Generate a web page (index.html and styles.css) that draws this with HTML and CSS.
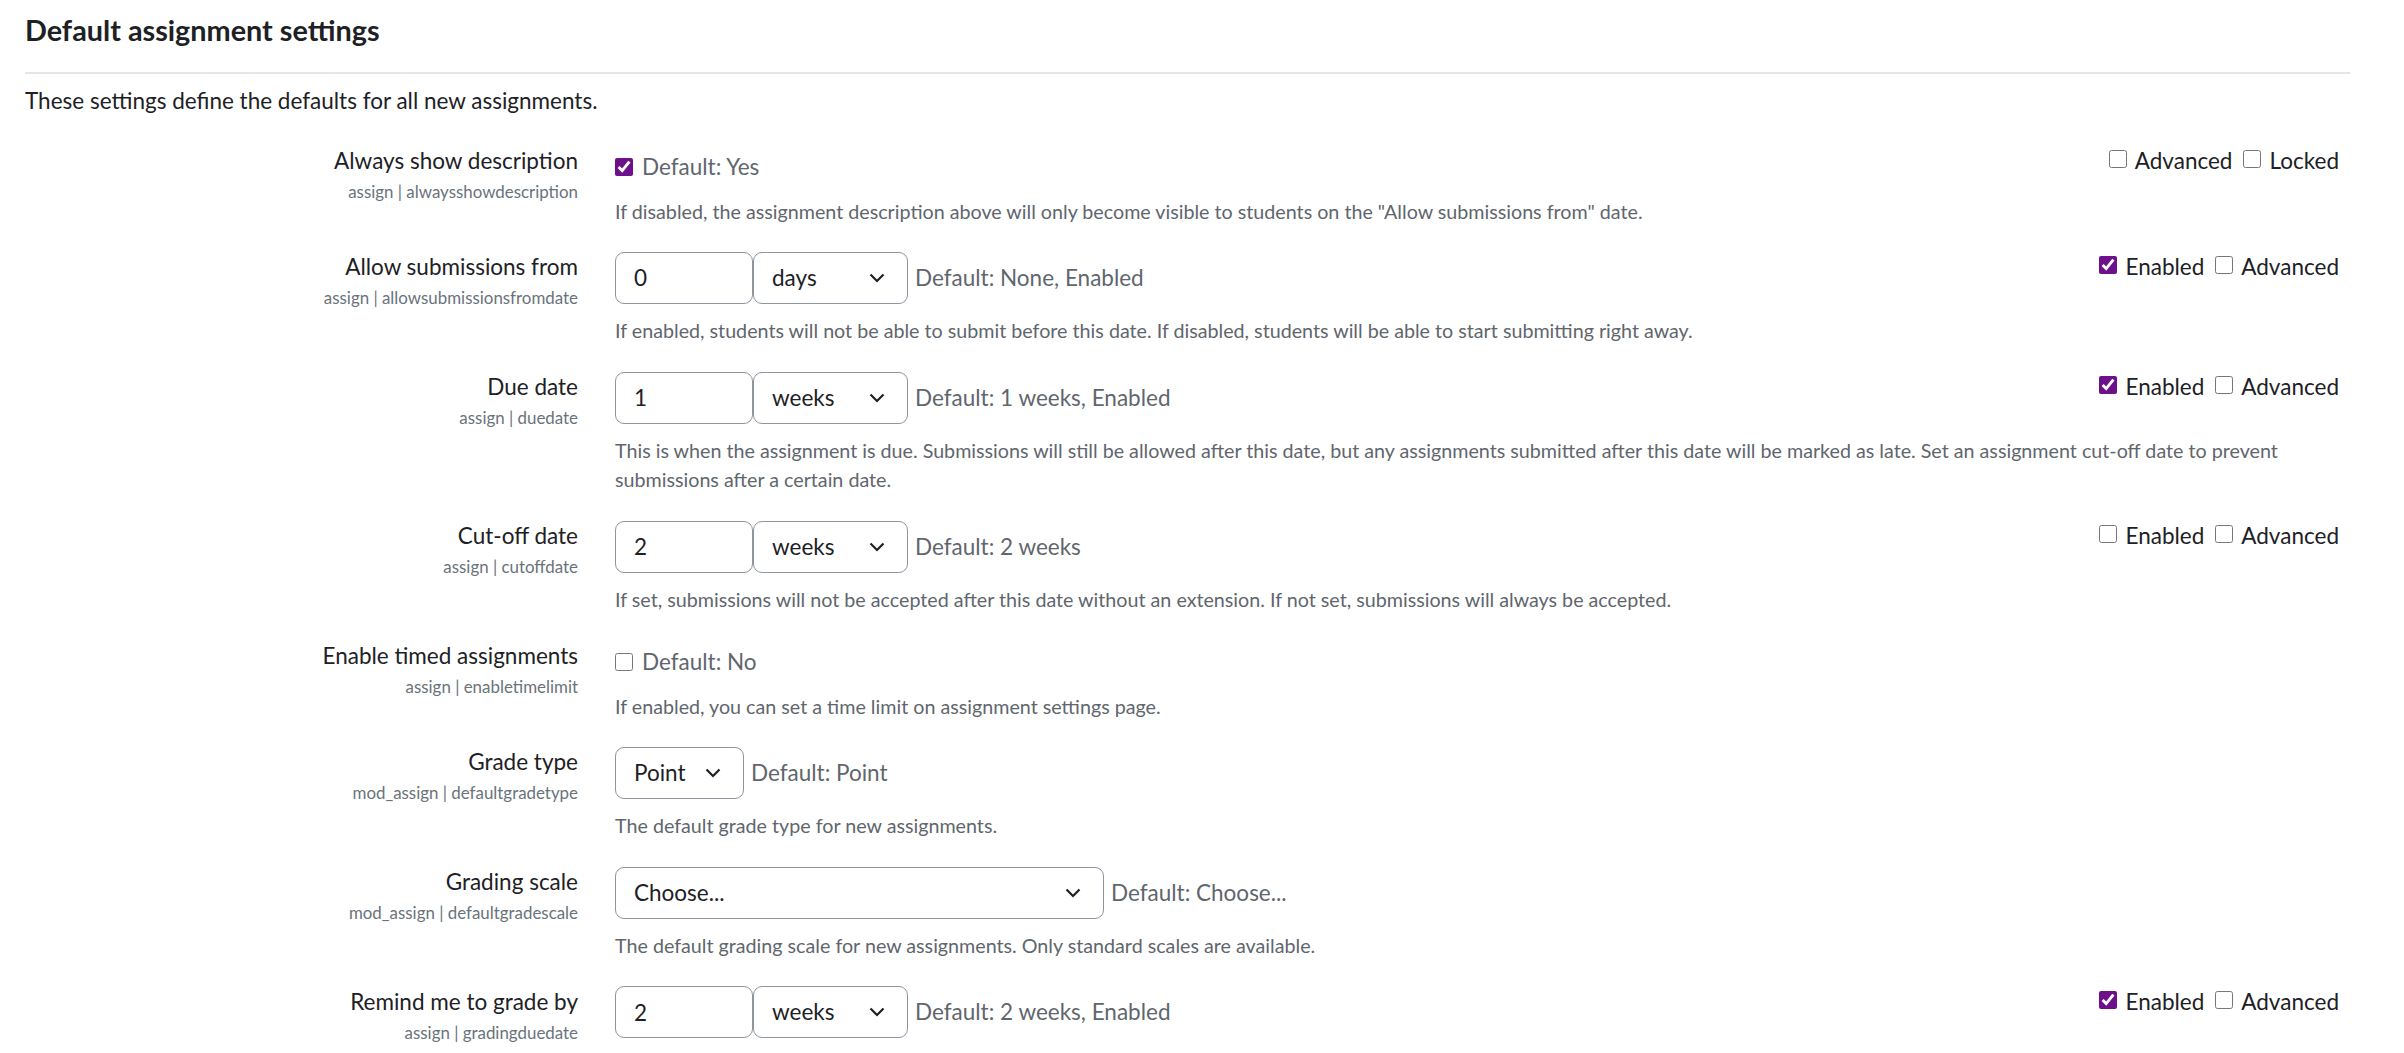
FILE: index.html
```html
<!DOCTYPE html>
<html lang="en">
<head>
    <meta charset="UTF-8">
    <title>Default assignment settings</title>
    <link rel="stylesheet" href="styles.css">
</head>
<body>
<div class="page">
    <h2 class="section-title">Default assignment settings</h2>
    <hr class="section-rule">
    <p class="intro">These settings define the defaults for all new assignments.</p>

    <!-- Always show description -->
    <div class="setting">
        <div class="setting-label">
            <label for="alwaysshowdescription">Always show description</label>
            <span class="shortname">assign | alwaysshowdescription</span>
        </div>
        <div class="setting-control">
            <div class="setting-line">
                <div class="field field-check">
                    <input type="checkbox" id="alwaysshowdescription" checked>
                    <span class="default-info">Default: Yes</span>
                </div>
                <div class="flags">
                    <label class="flag"><input type="checkbox"> Advanced</label>
                    <label class="flag"><input type="checkbox"> Locked</label>
                </div>
            </div>
            <div class="description">If disabled, the assignment description above will only become visible to students on the "Allow submissions from" date.</div>
        </div>
    </div>

    <!-- Allow submissions from -->
    <div class="setting">
        <div class="setting-label">
            <label for="allowsubmissionsfromdate">Allow submissions from</label>
            <span class="shortname">assign | allowsubmissionsfromdate</span>
        </div>
        <div class="setting-control">
            <div class="setting-line">
                <div class="field field-inputs">
                    <input type="text" class="text-input" id="allowsubmissionsfromdate" value="0">
                    <span class="select-wrap">
                        <select class="select-unit"><option>days</option></select>
                        <svg class="chevron" viewBox="0 0 16 10"><path d="M1.5 1.5 L8 8 L14.5 1.5"/></svg>
                    </span>
                    <span class="default-info">Default: None, Enabled</span>
                </div>
                <div class="flags">
                    <label class="flag"><input type="checkbox" checked> Enabled</label>
                    <label class="flag"><input type="checkbox"> Advanced</label>
                </div>
            </div>
            <div class="description">If enabled, students will not be able to submit before this date. If disabled, students will be able to start submitting right away.</div>
        </div>
    </div>

    <!-- Due date -->
    <div class="setting">
        <div class="setting-label">
            <label for="duedate">Due date</label>
            <span class="shortname">assign | duedate</span>
        </div>
        <div class="setting-control">
            <div class="setting-line">
                <div class="field field-inputs">
                    <input type="text" class="text-input" id="duedate" value="1">
                    <span class="select-wrap">
                        <select class="select-unit"><option>weeks</option></select>
                        <svg class="chevron" viewBox="0 0 16 10"><path d="M1.5 1.5 L8 8 L14.5 1.5"/></svg>
                    </span>
                    <span class="default-info">Default: 1 weeks, Enabled</span>
                </div>
                <div class="flags">
                    <label class="flag"><input type="checkbox" checked> Enabled</label>
                    <label class="flag"><input type="checkbox"> Advanced</label>
                </div>
            </div>
            <div class="description">This is when the assignment is due. Submissions will still be allowed after this date, but any assignments submitted after this date will be marked as late. Set an assignment cut-off date to prevent submissions after a certain date.</div>
        </div>
    </div>

    <!-- Cut-off date -->
    <div class="setting">
        <div class="setting-label">
            <label for="cutoffdate">Cut-off date</label>
            <span class="shortname">assign | cutoffdate</span>
        </div>
        <div class="setting-control">
            <div class="setting-line">
                <div class="field field-inputs">
                    <input type="text" class="text-input" id="cutoffdate" value="2">
                    <span class="select-wrap">
                        <select class="select-unit"><option>weeks</option></select>
                        <svg class="chevron" viewBox="0 0 16 10"><path d="M1.5 1.5 L8 8 L14.5 1.5"/></svg>
                    </span>
                    <span class="default-info">Default: 2 weeks</span>
                </div>
                <div class="flags">
                    <label class="flag"><input type="checkbox"> Enabled</label>
                    <label class="flag"><input type="checkbox"> Advanced</label>
                </div>
            </div>
            <div class="description">If set, submissions will not be accepted after this date without an extension. If not set, submissions will always be accepted.</div>
        </div>
    </div>

    <!-- Enable timed assignments -->
    <div class="setting">
        <div class="setting-label">
            <label for="enabletimelimit">Enable timed assignments</label>
            <span class="shortname">assign | enabletimelimit</span>
        </div>
        <div class="setting-control">
            <div class="setting-line">
                <div class="field field-check">
                    <input type="checkbox" id="enabletimelimit">
                    <span class="default-info">Default: No</span>
                </div>
            </div>
            <div class="description">If enabled, you can set a time limit on assignment settings page.</div>
        </div>
    </div>

    <!-- Grade type -->
    <div class="setting">
        <div class="setting-label">
            <label for="defaultgradetype">Grade type</label>
            <span class="shortname">mod_assign | defaultgradetype</span>
        </div>
        <div class="setting-control">
            <div class="setting-line">
                <div class="field field-inputs">
                    <span class="select-wrap">
                        <select class="select-gradetype" id="defaultgradetype"><option>Point</option></select>
                        <svg class="chevron" viewBox="0 0 16 10"><path d="M1.5 1.5 L8 8 L14.5 1.5"/></svg>
                    </span>
                    <span class="default-info">Default: Point</span>
                </div>
            </div>
            <div class="description">The default grade type for new assignments.</div>
        </div>
    </div>

    <!-- Grading scale -->
    <div class="setting">
        <div class="setting-label">
            <label for="defaultgradescale">Grading scale</label>
            <span class="shortname">mod_assign | defaultgradescale</span>
        </div>
        <div class="setting-control">
            <div class="setting-line">
                <div class="field field-inputs">
                    <span class="select-wrap">
                        <select class="select-scale" id="defaultgradescale"><option>Choose...</option></select>
                        <svg class="chevron" viewBox="0 0 16 10"><path d="M1.5 1.5 L8 8 L14.5 1.5"/></svg>
                    </span>
                    <span class="default-info">Default: Choose...</span>
                </div>
            </div>
            <div class="description">The default grading scale for new assignments. Only standard scales are available.</div>
        </div>
    </div>

    <!-- Remind me to grade by -->
    <div class="setting">
        <div class="setting-label">
            <label for="gradingduedate">Remind me to grade by</label>
            <span class="shortname">assign | gradingduedate</span>
        </div>
        <div class="setting-control">
            <div class="setting-line">
                <div class="field field-inputs">
                    <input type="text" class="text-input" id="gradingduedate" value="2">
                    <span class="select-wrap">
                        <select class="select-unit"><option>weeks</option></select>
                        <svg class="chevron" viewBox="0 0 16 10"><path d="M1.5 1.5 L8 8 L14.5 1.5"/></svg>
                    </span>
                    <span class="default-info">Default: 2 weeks, Enabled</span>
                </div>
                <div class="flags">
                    <label class="flag"><input type="checkbox" checked> Enabled</label>
                    <label class="flag"><input type="checkbox"> Advanced</label>
                </div>
            </div>
        </div>
    </div>
</div>
</body>
</html>
```

FILE: styles.css
```css
body {
    margin: 0;
    font-family: Lato, "Noto Sans", sans-serif;
    font-size: 22.5px;
    line-height: 1.5;
    color: #1d2125;
    background-color: #fff;
}

.page {
    padding: 13px 54px 0 25px;
}

.section-title {
    margin: 0;
    font-size: 28.8px;
    font-weight: 700;
    line-height: 34px;
}

.section-rule {
    margin: 25px 0 10px;
    border: 0;
    border-top: 2px solid #e4e5e6;
}

.intro {
    margin: 0 0 26px;
}

/* one row of the admin form */
.setting {
    display: grid;
    grid-template-columns: 553px 1fr;
    column-gap: 37px;
    margin: 0 11px 24.5px 0;
}

.setting-label {
    text-align: right;
}

.setting-label label {
    display: block;
}

.shortname {
    display: block;
    font-size: 16.9px;
    line-height: 27px;
    color: #6a737b;
}

.setting-line {
    display: flex;
    justify-content: space-between;
    align-items: flex-start;
}

.field {
    display: flex;
    align-items: center;
}

.field-check {
    padding-top: 6.5px;
}

.field-inputs {
    padding-top: 1.5px;
}

.default-info {
    color: #5f666d;
    margin-left: 7px;
}

.field-check .default-info {
    margin-left: 9px;
}

input[type="checkbox"] {
    width: 18px;
    height: 18px;
    margin: 0;
    accent-color: #6d108b;
}

.text-input {
    box-sizing: border-box;
    width: 138px;
    height: 52px;
    padding: 0 18px;
    border: 1px solid #8f959e;
    border-radius: 9px;
    font: inherit;
    color: #1d2125;
}

.select-wrap {
    position: relative;
    display: inline-flex;
}

.select-wrap select {
    box-sizing: border-box;
    height: 52px;
    padding: 0 40px 0 18px;
    border: 1px solid #8f959e;
    border-radius: 9px;
    background-color: #fff;
    font: inherit;
    color: #1d2125;
    appearance: none;
}

.select-unit {
    width: 155px;
}

.select-gradetype {
    width: 129px;
}

.select-scale {
    width: 489px;
}

.chevron {
    position: absolute;
    right: 23px;
    top: 50%;
    width: 16px;
    height: 10px;
    margin-top: -5px;
    pointer-events: none;
}

.chevron path {
    fill: none;
    stroke: #1d2125;
    stroke-width: 2.2;
}

.flags {
    display: flex;
    align-items: center;
    gap: 11px;
}

.flag {
    display: flex;
    align-items: center;
    gap: 8px;
}

.flag input {
    margin-bottom: 4px;
}

.description {
    margin-top: 12.5px;
    font-size: 19.7px;
    line-height: 29.25px;
    color: #5f666d;
}
```
